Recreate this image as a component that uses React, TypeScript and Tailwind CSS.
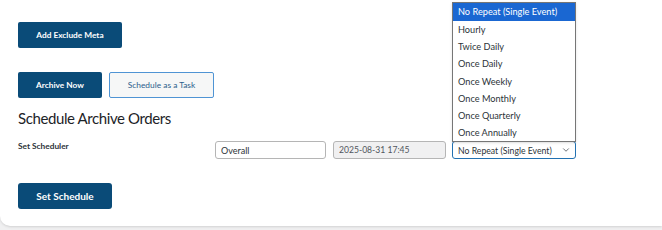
import { ChevronDown } from "lucide-react";

const options = [
  "No Repeat (Single Event)",
  "Hourly",
  "Twice Daily",
  "Once Daily",
  "Once Weekly",
  "Once Monthly",
  "Once Quarterly",
  "Once Annually",
];

export default function App() {
  return (
    <div
      className="h-[230px] w-full overflow-hidden bg-[#f0f0f1]"
      style={{ fontFamily: 'Lato, "Noto Sans", sans-serif' }}
    >
      <div className="relative h-[226px] rounded-bl-[10px] bg-white pl-[18px] pt-[20px] shadow-sm">
        <button className="h-[26px] w-[104px] rounded-[2px] bg-[#0a4b78] text-[8.3px] font-bold text-white">
          Add Exclude Meta
        </button>

        <div className="mt-[24px] flex gap-[7px]">
          <button className="h-[26px] w-[84px] rounded-[2px] bg-[#0a4b78] text-[8.3px] font-bold text-white">
            Archive Now
          </button>
          <button className="h-[26px] w-[105px] rounded-[2px] border border-[#4f94d4] bg-[#f6f7f7] text-[8.4px] text-[#2c5e8c]">
            Schedule as a Task
          </button>
        </div>

        <h2 className="mt-[9px] text-[15px] leading-[22px] tracking-[-0.4px] text-[#1d2327]">
          Schedule Archive Orders
        </h2>

        <div className="mt-[12px] flex items-start">
          <div className="-mt-[1px] w-[197px] text-[8.3px] font-bold text-[#2c3338]">
            Set Scheduler
          </div>
          <input
            readOnly
            value="Overall"
            className="h-[18px] w-[111px] rounded-[3px] border border-[#b5b5b5] px-[5px] text-[9px] text-[#2c3338] outline-none"
          />
          <input
            readOnly
            value="2025-08-31 17:45"
            className="ml-[7px] h-[18px] w-[113px] rounded-[3px] border border-[#b5b5b5] bg-[#f0f0f1] px-[5px] text-[8.6px] text-[#50575e] outline-none"
          />
          <div className="ml-[6px] flex h-[18px] w-[124px] items-center justify-between whitespace-nowrap rounded-[3px] border border-[#2271b1] pl-[5px] pr-[4px] text-[8.7px] text-[#2c3338]">
            <span>No Repeat (Single Event)</span>
            <ChevronDown size={10} strokeWidth={2} className="text-[#50575e]" />
          </div>
        </div>

        <button className="mt-[24px] h-[26px] w-[94px] rounded-[3px] bg-[#0a4b78] text-[10px] font-bold text-white">
          Set Schedule
        </button>

        <ul className="absolute left-[452px] top-[2px] w-[124px] border border-[#767676] bg-white text-[9.2px] text-[#2c3338] shadow-sm">
          {options.map((o, i) => (
            <li
              key={o}
              className={
                i === 0
                  ? "h-[18px] whitespace-nowrap bg-[#1a67d2] pl-[5px] leading-[18px] text-white"
                  : "h-[17.2px] whitespace-nowrap pl-[5px] leading-[17px]"
              }
            >
              {o}
            </li>
          ))}
        </ul>
      </div>
    </div>
  );
}
